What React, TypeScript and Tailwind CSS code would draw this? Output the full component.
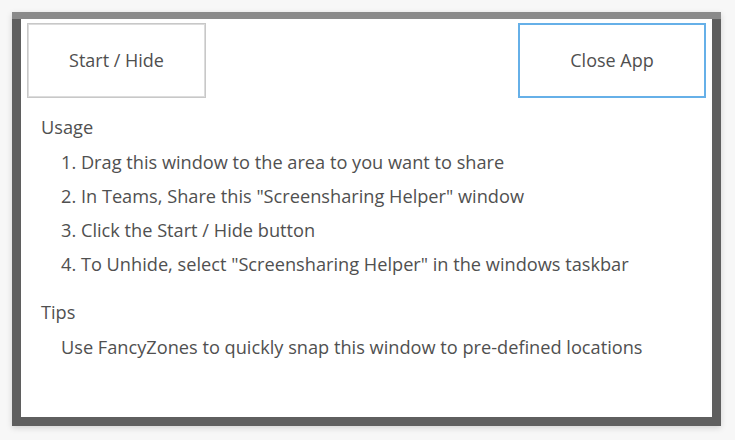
const steps = [
  'Drag this window to the area to you want to share',
  'In Teams, Share this "Screensharing Helper" window',
  'Click the Start / Hide button',
  'To Unhide, select "Screensharing Helper" in the windows taskbar',
];

const App = () => {
  return (
    <div className="w-[735px] h-[440px] bg-[#f7f7f7] p-3" style={{ fontFamily: '"Open Sans", "Noto Sans", sans-serif' }}>
      <div className="w-[709px] h-[414px] flex flex-col shadow-[0_2px_6px_rgba(0,0,0,0.15)]">
        <div className="h-[7px] bg-[#8a8a8a]" />
        <div className="flex-1 flex flex-col bg-white border-x-[9px] border-b-[9px] border-[#5f5f5f]">
          <div className="flex justify-between px-1.5 pt-1">
            <button className="w-[179px] h-[75px] border-2 border-[#dcdcdc] outline outline-1 outline-[#c8c8c8] -outline-offset-1 bg-white text-[18px] text-[#4f4f4f]">
              Start / Hide
            </button>
            <button className="w-[188px] h-[75px] border-2 border-[#66b0e8] bg-white text-[18px] text-[#4f4f4f]">
              Close App
            </button>
          </div>
          <div className="pl-5 pt-[14px] text-[18.2px] text-[#505050]">
            <div className="h-[30px] leading-[30px] mb-[3px]">Usage</div>
            <ol className="pl-5">
              {steps.map((s, i) => (
                <li key={i} className="h-[34px] leading-[34px]">
                  {i + 1}. {s}
                </li>
              ))}
            </ol>
            <div className="h-[30px] leading-[30px] mt-[16px]">Tips</div>
            <div className="pl-5 h-[40px] leading-[40px]">Use FancyZones to quickly snap this window to pre-defined locations</div>
          </div>
        </div>
      </div>
    </div>
  );
};

export default App;
